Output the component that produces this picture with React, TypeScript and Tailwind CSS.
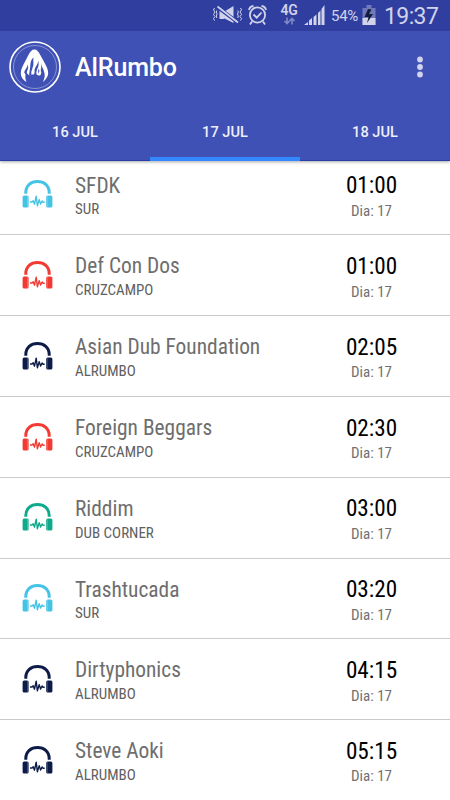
const shows = [
  { artist: "SFDK", stage: "SUR", time: "01:00", color: "text-[#45c3e5]" },
  { artist: "Def Con Dos", stage: "CRUZCAMPO", time: "01:00", color: "text-[#f23a32]" },
  { artist: "Asian Dub Foundation", stage: "ALRUMBO", time: "02:05", color: "text-[#0c1b48]" },
  { artist: "Foreign Beggars", stage: "CRUZCAMPO", time: "02:30", color: "text-[#f23a32]" },
  { artist: "Riddim", stage: "DUB CORNER", time: "03:00", color: "text-[#0fa98b]" },
  { artist: "Trashtucada", stage: "SUR", time: "03:20", color: "text-[#45c3e5]" },
  { artist: "Dirtyphonics", stage: "ALRUMBO", time: "04:15", color: "text-[#0c1b48]" },
  { artist: "Steve Aoki", stage: "ALRUMBO", time: "05:15", color: "text-[#0c1b48]" },
];

const tabs = ["16 JUL", "17 JUL", "18 JUL"];

function Headphones({ className }: { className: string }) {
  return (
    <svg viewBox="0 0 32 32" className={`h-8 w-8 ${className}`}>
      <path d="M3.800 15.800V14.500C3.800 7.500 9 3.500 15.500 3.500S27.200 7.500 27.200 14.500V15.800" fill="none" stroke="currentColor" strokeWidth="3" />
      <rect x="0.6" y="17.500" width="6" height="12" rx="1.500" fill="currentColor" />
      <rect x="24.200" y="17.500" width="6.200" height="12" rx="1.500" fill="currentColor" />
      <path d="M5.500 18V29M25.300 18V29" stroke="white" strokeOpacity=".35" strokeWidth=".6" />
      <path d="M8 24h2l1.200-1.300 1.300 3.500 1.700-8 1.200 9.600 1.800-6.200 1.400 4.400 1.500-3 1 1.200h1.600" fill="none" stroke="currentColor" strokeWidth="1.400" strokeLinejoin="round" />
    </svg>
  );
}

function Logo() {
  return (
    <svg viewBox="0 0 52 52" className="h-[52px] w-[52px] shrink-0">
      <circle cx="26" cy="26" r="25" fill="none" stroke="white" strokeWidth="1.600" />
      <circle cx="26" cy="26" r="21.500" fill="none" stroke="white" strokeOpacity=".55" strokeWidth=".7" />
      {/* flame silhouette */}
      <path
        d="M25.300 8.500C28 8.500 29.500 10.500 31 13.500L36.500 23.500C40 30 41 35.500 33.800 41C36 37 36.500 33 34.500 29.500Q34 33.500 30.500 34.500Q27 34.500 26.500 31.500Q25.500 34 23.500 33.500L20.500 34.500Q18.300 33.500 17.500 31C16 34 15.800 37 17.500 41C11 37.500 10.500 31 14 24.500L19.700 13.500C21.300 10.500 22.800 8.500 25.300 8.500Z"
        fill="white"
      />
      {/* gaps between the tongues */}
      <path
        d="M24.500 16.500C20.500 20 21.800 24.500 20.800 28.500L20 34.500H22.500Q21.800 30.500 23.500 27C25.300 23.500 23.800 20 24.500 16.500ZM29 19.500C29.500 24 25 26 25.600 31L25 35H27.500Q26.800 31 28.200 28C29.800 25.500 30.200 22 29 19.500ZM32.500 22C32.800 26 31 28.500 32.300 31.500L31.500 35L34.500 34.500L34.800 29.500Q32.800 27 32.500 22ZM18.800 23C18.500 27 16 28 15.200 31.500L17 34L18 30.500Q20 27 18.800 23ZM29.800 27.500Q28.500 30 29.500 33Q31.200 30 29.800 27.500Z"
        fill="#3f51b5"
      />
    </svg>
  );
}

function StatusBar() {
  return (
    <div className="relative flex h-[31px] items-start bg-[#303f9f] pl-[212px] text-[#d0d3ea]">
      <svg viewBox="0 0 180 31" className="h-[31px] w-[180px] shrink-0" fill="none" stroke="currentColor">
        <path d="M2.500 8l-1 2 1.500 2-1.500 2.500 1.500 2-1.500 2 1 2M4.800 10.500l-.5 1.500.8 2-.8 2 .5 2M28.500 8l1 2-1.500 2 1.500 2.500-1.500 2 1.500 2-1 2M25.800 10.500l.5 1.500-.8 2 .8 2-.5 2" strokeWidth="1" />
        <path d="M7.500 11h4l1 1v6.500l-1 .5h-4ZM12.500 11.500 21.500 6v17l-9-4.500Z" fill="currentColor" stroke="none" />
        <path d="m6 7.500 20 15" stroke="#303f9f" strokeWidth="3.500" />
        <path d="m5.500 6.500 20.500 16" strokeWidth="1.800" />
        <circle cx="45.500" cy="15" r="7.600" strokeWidth="1.800" />
        <path d="m41.500 14.500 3.200 3.200 4.800-5.200M37 10q.5-3.500 4.500-4M54 10q-.5-3.500-4.500-4M40 21.500l-2 3M51 21.500l2 3" strokeWidth="1.800" />
        <path d="M75 17.500v6M72.500 21l2.500 2.500L77.500 21M80 24.500v-6M77.500 21l2.500-2.500 2.500 2.500" strokeOpacity=".5" strokeWidth="1.600" />
        <path d="M92 25l4-3v3ZM97 25v-4.500l3-2.500v7ZM101.500 25v-8l3-2.500V25ZM106 25V13l2.500-2.500V25ZM109.500 25V9l3-4v20Z" fill="currentColor" stroke="none" />
        <path d="M150.500 8h4V5h5v3h4v17h-13Z" fill="#7079bb" stroke="none" />
        <path d="M150.500 18h13v7h-13Z" fill="currentColor" stroke="none" />
        <path d="m156 9-3.500 8h4l-1.500 6 6-9h-4l2.500-4.500Z" fill="#151d3d" stroke="none" />
      </svg>
      <span className="absolute left-[280.5px] top-[2px] text-[14px] leading-[16px] font-semibold tracking-[-0.3px]">4G</span>
      <span className="absolute left-[331px] top-[7px] text-[15px] leading-[18px] tracking-[-0.3px]">54%</span>
      <span className="absolute left-[384px] top-[3px] text-[23px] leading-[27px] tracking-[-0.6px]">19:37</span>
    </div>
  );
}

export default function App() {
  return (
    <div className="h-[800px] w-[450px] overflow-hidden bg-white font-['Roboto',sans-serif]">
      <header className="relative z-10 h-[161px] border-b border-[#283da8] bg-[#3f51b5] shadow-[0_1px_3px_rgba(0,0,0,0.35)]">
        <StatusBar />
        <div className="flex h-[71px] items-center pl-[9px]">
          <Logo />
          <h1 className="mt-0.5 ml-[14px] text-[25px] font-medium tracking-[-0.1px] text-white">AlRumbo</h1>
          <svg viewBox="0 0 6 22" className="mr-[27px] ml-auto h-[22px] w-1.5 fill-[#d0d4ec]">
            <circle cx="3" cy="3.500" r="2.900" />
            <circle cx="3" cy="11" r="2.900" />
            <circle cx="3" cy="18.500" r="2.900" />
          </svg>
        </div>
        <nav className="grid h-[59px] grid-cols-3">
          {tabs.map((tab, i) => (
            <button
              key={tab}
              className={`border-b-4 pt-1.5 text-[14.6px] font-medium text-[#eceef8] ${i === 1 ? "border-[#3388ff]" : "border-transparent"}`}
            >
              {tab}
            </button>
          ))}
        </nav>
      </header>

      <ul className="-mt-[6.4px] font-['Roboto_Condensed','Roboto',sans-serif] [font-stretch:75%]">
        {shows.map((show) => (
          <li key={show.artist} className="flex h-[80.8px] border-b border-[#cacaca] pl-[22px]">
            <Headphones className={`mt-[23.5px] ${show.color}`} />
            <div className="ml-[21px] flex-1 pt-[18px]">
              <h2 className="text-[21.4px] leading-[26px] text-[#6e6e6e]">{show.artist}</h2>
              <p className="mt-[1.8px] text-[15px] leading-[18px] text-[#606060]">{show.stage}</p>
            </div>
            <div className="w-[157px] pt-[16.5px] text-center">
              <p className="text-[23.2px] leading-7 text-black">{show.time}</p>
              <p className="mt-[2.7px] text-[15px] leading-[18px] text-[#707070]">Dia: 17</p>
            </div>
          </li>
        ))}
      </ul>
    </div>
  );
}
